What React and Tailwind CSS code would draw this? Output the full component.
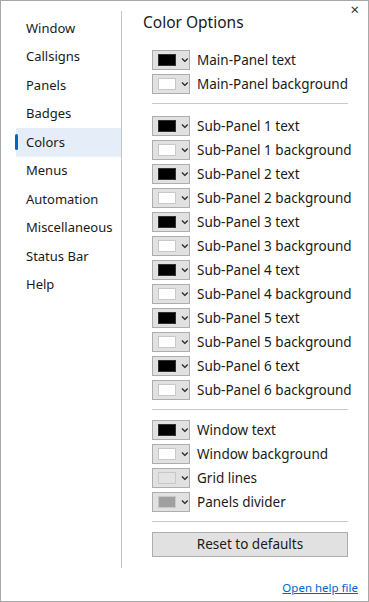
import React from "react";

const navItems = [
  "Window",
  "Callsigns",
  "Panels",
  "Badges",
  "Colors",
  "Menus",
  "Automation",
  "Miscellaneous",
  "Status Bar",
  "Help",
];

const groups = [
  [
    ["Main-Panel text", "#000000"],
    ["Main-Panel background", "#ffffff"],
  ],
  [
    ["Sub-Panel 1 text", "#000000"],
    ["Sub-Panel 1 background", "#ffffff"],
    ["Sub-Panel 2 text", "#000000"],
    ["Sub-Panel 2 background", "#ffffff"],
    ["Sub-Panel 3 text", "#000000"],
    ["Sub-Panel 3 background", "#ffffff"],
    ["Sub-Panel 4 text", "#000000"],
    ["Sub-Panel 4 background", "#ffffff"],
    ["Sub-Panel 5 text", "#000000"],
    ["Sub-Panel 5 background", "#ffffff"],
    ["Sub-Panel 6 text", "#000000"],
    ["Sub-Panel 6 background", "#ffffff"],
  ],
  [
    ["Window text", "#000000"],
    ["Window background", "#ffffff"],
    ["Grid lines", "#e3e3e3"],
    ["Panels divider", "#a0a0a0"],
  ],
];

function ColorRow({ label, color }) {
  // swatch border is darker on black, light grey otherwise
  const edge = color === "#000000" ? "border-[#333]" : "border-[#c8c8c8]";
  return (
    <div className="flex h-6 items-center">
      <button className="flex h-[20px] w-[38px] shrink-0 items-center border border-[#adadad] bg-[#e1e1e1] pl-[5px]">
        <span className={`block h-[12px] w-[19px] border ${edge}`} style={{ background: color }} />
        <svg className="ml-[5px]" width="8" height="6" viewBox="0 0 8 6">
          <path d="M1 1.5 L4 4.5 L7 1.5" fill="none" stroke="#222" strokeWidth="1.3" />
        </svg>
      </button>
      <span className="ml-[7px] whitespace-nowrap text-[13.5px] text-[#1a1a1a]">{label}</span>
    </div>
  );
}

export default function App() {
  return (
    <div
      className="relative flex h-[602px] w-[369px] border border-[#a8a8a8] bg-white text-black"
      style={{ fontFamily: "'Segoe UI', 'Noto Sans', sans-serif" }}
    >
      <button className="absolute right-[9px] top-[1px] text-[15px] leading-none text-[#333]">×</button>

      {/* left nav */}
      <div className="flex w-[120px] shrink-0 flex-col pl-[15px] pt-[13px]">
        {navItems.map((item) => {
          const active = item === "Colors";
          return (
            <div
              key={item}
              className={`relative flex h-[28.5px] items-center whitespace-nowrap pl-[10px] text-[13px] text-[#1a1a1a] ${
                active ? "bg-[#e5eef8]" : ""
              }`}
            >
              {active && <span className="absolute -left-[1px] top-[6px] h-[16px] w-[3px] rounded-full bg-[#0067c0]" />}
              {item}
            </div>
          );
        })}
      </div>

      <div className="mt-[10px] h-[557px] w-px shrink-0 bg-[#c4c4c4]" />

      {/* content */}
      <div className="flex min-w-0 flex-1 flex-col pl-[30px] pr-[20px]">
        <h1 className="ml-[-9px] mt-[10px] text-[15.5px] leading-[22px] text-[#1a1a1a]">Color Options</h1>
        <div className="mt-[15px] flex flex-col">
          {groups.map((rows, gi) => (
            <div key={gi} className="flex flex-col">
              {gi > 0 && <div className={`${gi === 2 ? "mb-[8px]" : "mb-[10px]"} mt-[7px] h-px bg-[#c8c8c8]`} />}
              {rows.map(([label, color]) => (
                <ColorRow key={label} label={label} color={color} />
              ))}
            </div>
          ))}
          <div className="mb-[10px] mt-[7px] h-px bg-[#c8c8c8]" />
          <button className="h-[25px] border border-[#adadad] bg-[#e1e1e1] text-[13.5px] text-[#1a1a1a]">
            Reset to defaults
          </button>
        </div>
        <div className="mt-auto mb-[5px] flex justify-end -mr-[10px]">
          <a href="#" className="text-[11.5px] text-[#0066cc] underline">
            Open help file
          </a>
        </div>
      </div>
    </div>
  );
}
